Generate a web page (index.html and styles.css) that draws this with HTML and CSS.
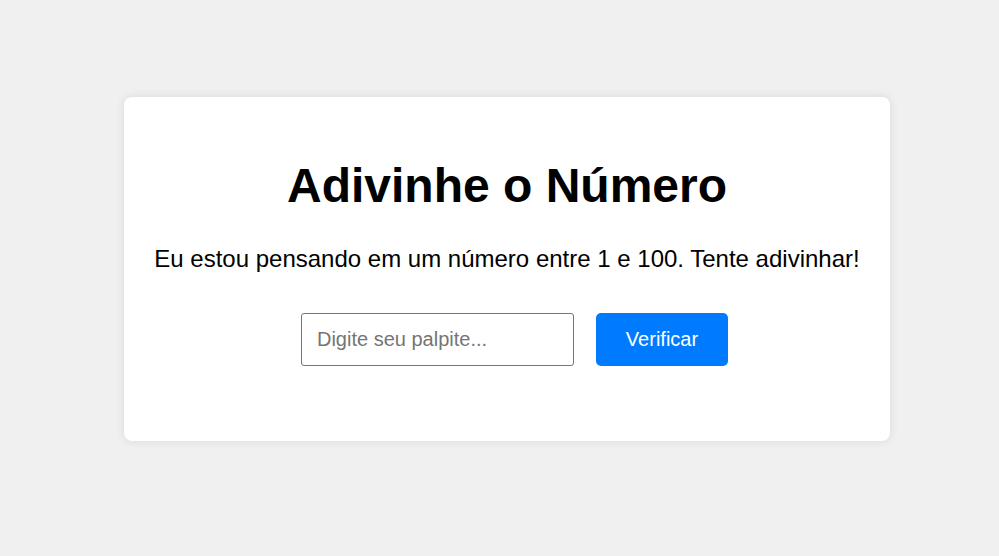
FILE: index.html
```html
<!DOCTYPE html>
<html lang="pt-BR">
<head>
<meta charset="UTF-8">
<title>Adivinhe o Número</title>
<link rel="stylesheet" href="styles.css">
</head>
<body>
<main class="card">
  <h1 class="title">Adivinhe o Número</h1>
  <p class="lead">Eu estou pensando em um número entre 1 e 100. Tente adivinhar!</p>
  <div class="form">
    <input class="guess" type="number" placeholder="Digite seu palpite...">
    <button class="check" type="button">Verificar</button>
  </div>
</main>
</body>
</html>
```

FILE: styles.css
```css
html, body {
  margin: 0;
  padding: 0;
}
body {
  background: #f0f0f0;
  font-family: "Liberation Sans", Arial, sans-serif;
  display: flex;
  justify-content: center;
  align-items: flex-start;
  padding-top: 97px;
  padding-left: 15px;
  min-height: 556px;
  box-sizing: border-box;
}
.card {
  background: #fff;
  border-radius: 8px;
  box-shadow: 0 0 10px rgba(0, 0, 0, 0.1);
  padding: 61px 30px 75px;
  text-align: center;
}
.title {
  margin: 0;
  font-size: 48px;
  line-height: 56px;
  font-weight: bold;
  color: #000;
}
.lead {
  margin: 32px 0 0;
  font-size: 24px;
  line-height: 26px;
  color: #000;
}
.form {
  margin-top: 41px;
  display: flex;
  justify-content: center;
  gap: 22px;
  padding-left: 15px;
}
.guess {
  box-sizing: border-box;
  width: 273px;
  height: 53px;
  padding: 0 15px;
  border: 1px solid #767676;
  border-radius: 3px;
  font-family: inherit;
  font-size: 20px;
  color: #000;
  background: #fff;
  -moz-appearance: textfield;
  appearance: textfield;
  outline: none;
}
.guess::-webkit-outer-spin-button,
.guess::-webkit-inner-spin-button {
  -webkit-appearance: none;
  margin: 0;
}
.guess::placeholder {
  color: #757575;
}
.check {
  box-sizing: border-box;
  width: 132px;
  height: 53px;
  border: none;
  border-radius: 5px;
  background: #007bff;
  color: #fff;
  font-family: inherit;
  font-size: 20px;
  cursor: pointer;
}
```
